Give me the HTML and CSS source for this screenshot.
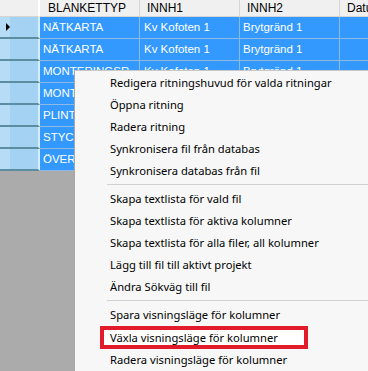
FILE: index.html
```html
<!DOCTYPE html>
<html lang="sv">
<head>
    <meta charset="UTF-8">
    <title>Ritningar</title>
    <link rel="stylesheet" href="styles.css">
</head>
<body>

<div class="grid">
    <div class="row head">
        <div class="rowhead"></div>
        <div class="cell c1">BLANKETTYP</div>
        <div class="cell c2">INNH1</div>
        <div class="cell c3">INNH2</div>
        <div class="cell c4">Datu</div>
    </div>
    <div class="row">
        <div class="rowhead current"><span class="arrow"></span></div>
        <div class="cell c1">NÄTKARTA</div>
        <div class="cell c2">Kv Kofoten 1</div>
        <div class="cell c3">Brytgränd 1</div>
        <div class="cell c4"></div>
    </div>
    <div class="row">
        <div class="rowhead"></div>
        <div class="cell c1">NÄTKARTA</div>
        <div class="cell c2">Kv Kofoten 1</div>
        <div class="cell c3">Brytgränd 1</div>
        <div class="cell c4"></div>
    </div>
    <div class="row">
        <div class="rowhead"></div>
        <div class="cell c1">MONTERINGSR</div>
        <div class="cell c2">Kv Kofoten 1</div>
        <div class="cell c3">Brytgränd 1</div>
        <div class="cell c4"></div>
    </div>
    <div class="row">
        <div class="rowhead"></div>
        <div class="cell c1">MONTERINGSR</div>
        <div class="cell c2">Kv Kofoten 1</div>
        <div class="cell c3">Brytgränd 1</div>
        <div class="cell c4"></div>
    </div>
    <div class="row">
        <div class="rowhead"></div>
        <div class="cell c1">PLINTRITNING</div>
        <div class="cell c2">Kv Kofoten 1</div>
        <div class="cell c3">Brytgränd 1</div>
        <div class="cell c4"></div>
    </div>
    <div class="row">
        <div class="rowhead"></div>
        <div class="cell c1">STYCKLISTA</div>
        <div class="cell c2">Kv Kofoten 1</div>
        <div class="cell c3">Brytgränd 1</div>
        <div class="cell c4"></div>
    </div>
    <div class="row">
        <div class="rowhead"></div>
        <div class="cell c1">ÖVERSIKT</div>
        <div class="cell c2">Kv Kofoten 1</div>
        <div class="cell c3">Brytgränd 1</div>
        <div class="cell c4"></div>
    </div>
</div>

<div class="menu">
    <div class="item">Redigera ritningshuvud för valda ritningar</div>
    <div class="item">Öppna ritning</div>
    <div class="item">Radera ritning</div>
    <div class="item">Synkronisera fil från databas</div>
    <div class="item">Synkronisera databas från fil</div>
    <div class="sep"></div>
    <div class="item">Skapa textlista för vald fil</div>
    <div class="item">Skapa textlista för aktiva kolumner</div>
    <div class="item">Skapa textlista för alla filer, all kolumner</div>
    <div class="item">Lägg till fil till aktivt projekt</div>
    <div class="item">Ändra Sökväg till fil</div>
    <div class="sep"></div>
    <div class="item">Spara visningsläge för kolumner</div>
    <div class="item marked">Växla visningsläge för kolumner</div>
    <div class="item">Radera visningsläge för kolumner</div>
</div>

</body>
</html>
```

FILE: styles.css
```css
body {
    margin: 0;
    width: 368px;
    height: 371px;
    overflow: hidden;
    background: #ababab;
    position: relative;
    font-family: "Liberation Sans", Arial, sans-serif;
}

.grid { width: 368px; }

.row {
    display: flex;
    height: 22px;
}

.rowhead {
    width: 40px;
    flex: none;
    box-sizing: border-box;
    background: linear-gradient(to right, #b6dcf6 0, #b6dcf6 10px, #a3d2f3 10px);
    border-bottom: 2px solid #5c8da3;
    border-right: 2px solid #d9ecf9;
    position: relative;
}

.cell {
    flex: none;
    box-sizing: border-box;
    background: #3399ff;
    color: #fff;
    font-size: 11.5px;
    line-height: 21px;
    white-space: nowrap;
    overflow: hidden;
    border-right: 1px solid #8eb9e4;
    border-bottom: 1px solid #8eb9e4;
}

.c1 { width: 100px; padding-left: 3px; }
.c2 { width: 100px; padding-left: 4px; }
.c3 { width: 100px; padding-left: 3px; }
.c4 { width: 28px; border-right: none; }

.head { height: 17px; }
.head .rowhead {
    background: #f0f0f0;
    border-bottom: 1px solid #d5d5d5;
    border-right: 2px solid #ffffff;
}
.head .cell {
    background: #f0f0f0;
    color: #000;
    font-size: 12px;
    line-height: 16px;
    padding-left: 7px;
    border-right: 1px solid #d5d5d5;
    border-bottom: 1px solid #d5d5d5;
}
.head .c1 { padding-left: 8px; }
.head .c4 { border-right: none; }

.arrow {
    position: absolute;
    left: 6px;
    top: 6px;
    width: 0;
    height: 0;
    border-top: 4px solid transparent;
    border-bottom: 4px solid transparent;
    border-left: 4px solid #000;
}

.menu {
    position: absolute;
    left: 74px;
    top: 70px;
    width: 300px;
    height: 310px;
    box-sizing: border-box;
    padding: 1px 0 0 0;
    background: #f7f7f7;
    border-left: 1px solid #a8a8a8;
    border-top: 1px solid #c8c8c8;
    font-family: "Noto Sans", "Open Sans", sans-serif;
    font-size: 11.2px;
    color: #000;
}

.item {
    height: 22px;
    line-height: 22px;
    padding-left: 35px;
    white-space: nowrap;
}

.item.marked {
    margin-left: 25px;
    width: 208px;
    height: 23px;
    line-height: 15px;
    box-sizing: border-box;
    padding-left: 6px;
    border: 4px solid #e21b2b;
    background: #ffffff;
}

.sep {
    height: 6px;
    margin-left: 32px;
    position: relative;
}
.sep::after {
    content: "";
    position: absolute;
    left: 0;
    right: 0;
    top: 2px;
    height: 1px;
    background: #d0d0d0;
}
```
